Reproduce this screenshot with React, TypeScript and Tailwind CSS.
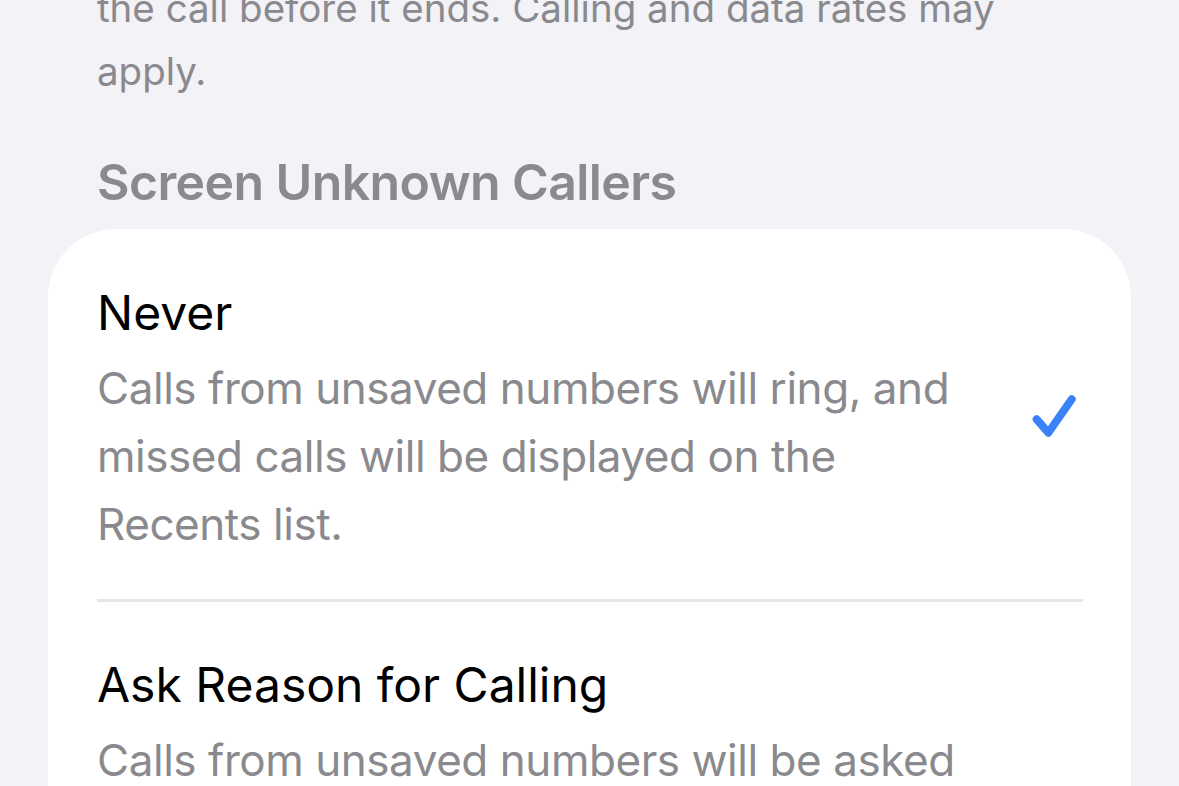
import React from "react";

const font = { fontFamily: "Inter, 'Noto Sans', 'Liberation Sans', sans-serif" };

function Check() {
  return (
    <svg width="48" height="48" viewBox="0 0 48 48" className="shrink-0 -mt-[9px]" fill="none">
      <path
        d="M6.7 26.3 L18.3 39.7 L41.7 6.3"
        stroke="#3982f7"
        strokeWidth="8"
        strokeLinecap="round"
        strokeLinejoin="round"
      />
    </svg>
  );
}

function Row({
  title,
  lines,
  checked,
  pad,
}: {
  title: string;
  lines: string[];
  checked?: boolean;
  pad: string;
}) {
  return (
    <div className={"flex items-center pl-[49px] pr-[53px] " + pad}>
      <div className="flex-1">
        <div className="text-[48px] leading-[58px] text-black">{title}</div>
        <div className="mt-[12px] text-[44px] leading-[68px] tracking-[-0.45px] text-[#8a8a8e]">
          {lines.map((l, i) => (
            <div key={i} className="whitespace-nowrap">
              {l}
            </div>
          ))}
        </div>
      </div>
      {checked ? <Check /> : null}
    </div>
  );
}

export default function App() {
  return (
    <div className="w-[1179px] h-[786px] overflow-hidden bg-[#f2f2f7]" style={font}>
      <div className="-mt-[23px] pl-[97px] text-[38.5px] leading-[63px] text-[#8a8a8e]">
        <div className="whitespace-nowrap">the call before it ends. Calling and data rates may</div>
        <div>apply.</div>
      </div>
      <div className="mt-[49px] pl-[97px] text-[50px] leading-[60px] tracking-[-0.6px] font-semibold text-[#8a8a8e]">
        Screen Unknown Callers
      </div>
      <div className="mx-[48px] mt-[17px] bg-white rounded-t-[68px] h-[700px]">
        <Row
          title="Never"
          pad="pt-[55px] pb-[41px]"
          lines={[
            "Calls from unsaved numbers will ring, and",
            "missed calls will be displayed on the",
            "Recents list.",
          ]}
          checked
        />
        <div className="ml-[49px] mr-[48px] h-[3px] bg-[#e5e5ea]" />
        <Row
          title="Ask Reason for Calling"
          pad="pt-[54px] pb-[41px]"
          lines={["Calls from unsaved numbers will be asked", "to share their name and reason for calling."]}
        />
      </div>
    </div>
  );
}
